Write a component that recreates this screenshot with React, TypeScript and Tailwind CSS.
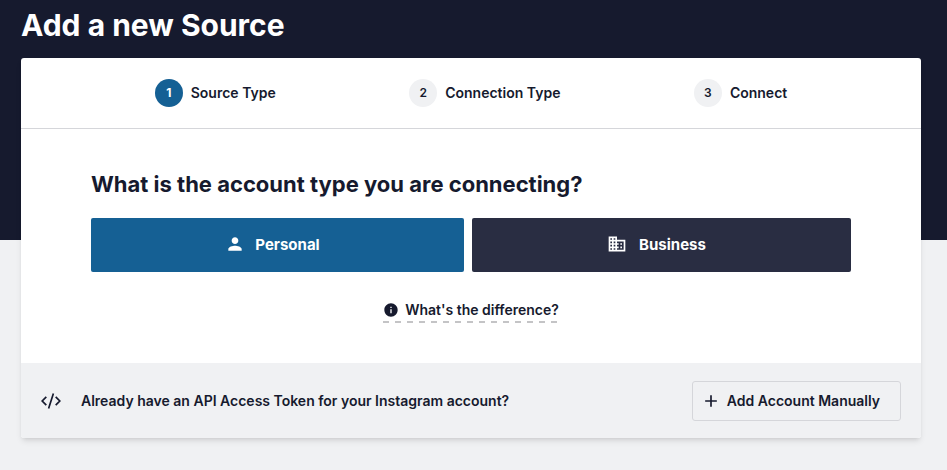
import React, { useState } from 'react';
import { MdAdd, MdBusiness, MdInfo, MdPerson } from 'react-icons/md';

interface Step {
  id: number;
  label: string;
}

const steps: Step[] = [
  { id: 1, label: 'Source Type' },
  { id: 2, label: 'Connection Type' },
  { id: 3, label: 'Connect' },
];

const StepItem: React.FC<{ step: Step; active: boolean }> = ({ step, active }) => (
  <li className="flex items-center gap-2" aria-current={active ? 'step' : undefined}>
    <span
      className={`flex h-7 w-7 items-center justify-center rounded-full text-xs ${
        active ? 'bg-[#156094] font-bold text-white' : 'bg-[#f0f1f3] font-semibold text-[#161a2e]'
      }`}
    >
      {step.id}
    </span>
    <span className="text-sm font-semibold">{step.label}</span>
  </li>
);

const CodeIcon: React.FC = () => (
  <svg width="20" height="20" viewBox="0 0 20 20" fill="none" stroke="currentColor" strokeWidth="1.7" aria-hidden="true">
    <path d="M5.3 5.8L1.2 10l4.1 4.2M14.7 5.8l4.1 4.2-4.1 4.2M12.4 2.6L7.6 17.4" />
  </svg>
);

const App: React.FC = () => {
  const [currentStep, setCurrentStep] = useState(1);

  return (
    <div className="min-h-screen bg-[linear-gradient(#161a2e_240px,#f0f1f3_240px)] pr-[26px] pb-8 pl-[21px] font-['Inter','Liberation_Sans',sans-serif] text-[#161a2e]">
      <h1 className="pt-1 pb-3 text-[30px] leading-[42px] font-bold text-white">Add a new Source</h1>

      <main className="overflow-hidden rounded-[3px] bg-white shadow-md">
        {/* Stepper */}
        <ol className="flex h-[71px] items-center justify-around border-b border-[#d5d6da] px-[67px]">
          {steps.map(step => (
            <StepItem key={step.id} step={step} active={step.id === currentStep} />
          ))}
        </ol>

        {/* Account type */}
        <section className="px-[70px] py-10">
          <h2 className="text-[22px] leading-[30px] font-bold">What is the account type you are connecting?</h2>
          <div className="mt-[19px] flex gap-2">
            <button
              type="button"
              onClick={() => setCurrentStep(2)}
              className="flex h-[54px] w-[373px] items-center justify-center gap-2.5 rounded-[2px] bg-[#156094] pr-2.5 text-[15px] font-bold text-white"
            >
              <MdPerson size={20} className="mb-0.5" />
              Personal
            </button>
            <button
              type="button"
              onClick={() => setCurrentStep(2)}
              className="flex h-[54px] flex-1 items-center justify-center gap-3 rounded-[2px] bg-[#292d42] pr-2.5 text-[15px] font-bold text-white"
            >
              <MdBusiness size={20} className="mb-0.5" />
              Business
            </button>
          </div>
          <div className="mt-7 flex justify-center">
            <button
              type="button"
              className="flex h-[23px] items-start gap-1.5 bg-[repeating-linear-gradient(90deg,#c4c4c6_0_6px,transparent_6px_12px)] bg-[length:100%_2px] bg-bottom bg-no-repeat text-sm font-semibold"
            >
              <span className="flex h-5 items-center">
                <MdInfo size={16} />
              </span>
              What's the difference?
            </button>
          </div>
        </section>

        {/* Manual token entry */}
        <footer className="flex items-center bg-[#f0f1f3] px-5 pt-[18px] pb-[17px]">
          <CodeIcon />
          <p className="ml-5 text-sm font-semibold">Already have an API Access Token for your Instagram account?</p>
          <button
            type="button"
            className="ml-auto flex h-10 items-center gap-1.5 rounded-[3px] border border-[#d5d6da] pr-5 pl-2 text-sm font-semibold"
          >
            <MdAdd size={20} />
            Add Account Manually
          </button>
        </footer>
      </main>
    </div>
  );
};

export default App;
